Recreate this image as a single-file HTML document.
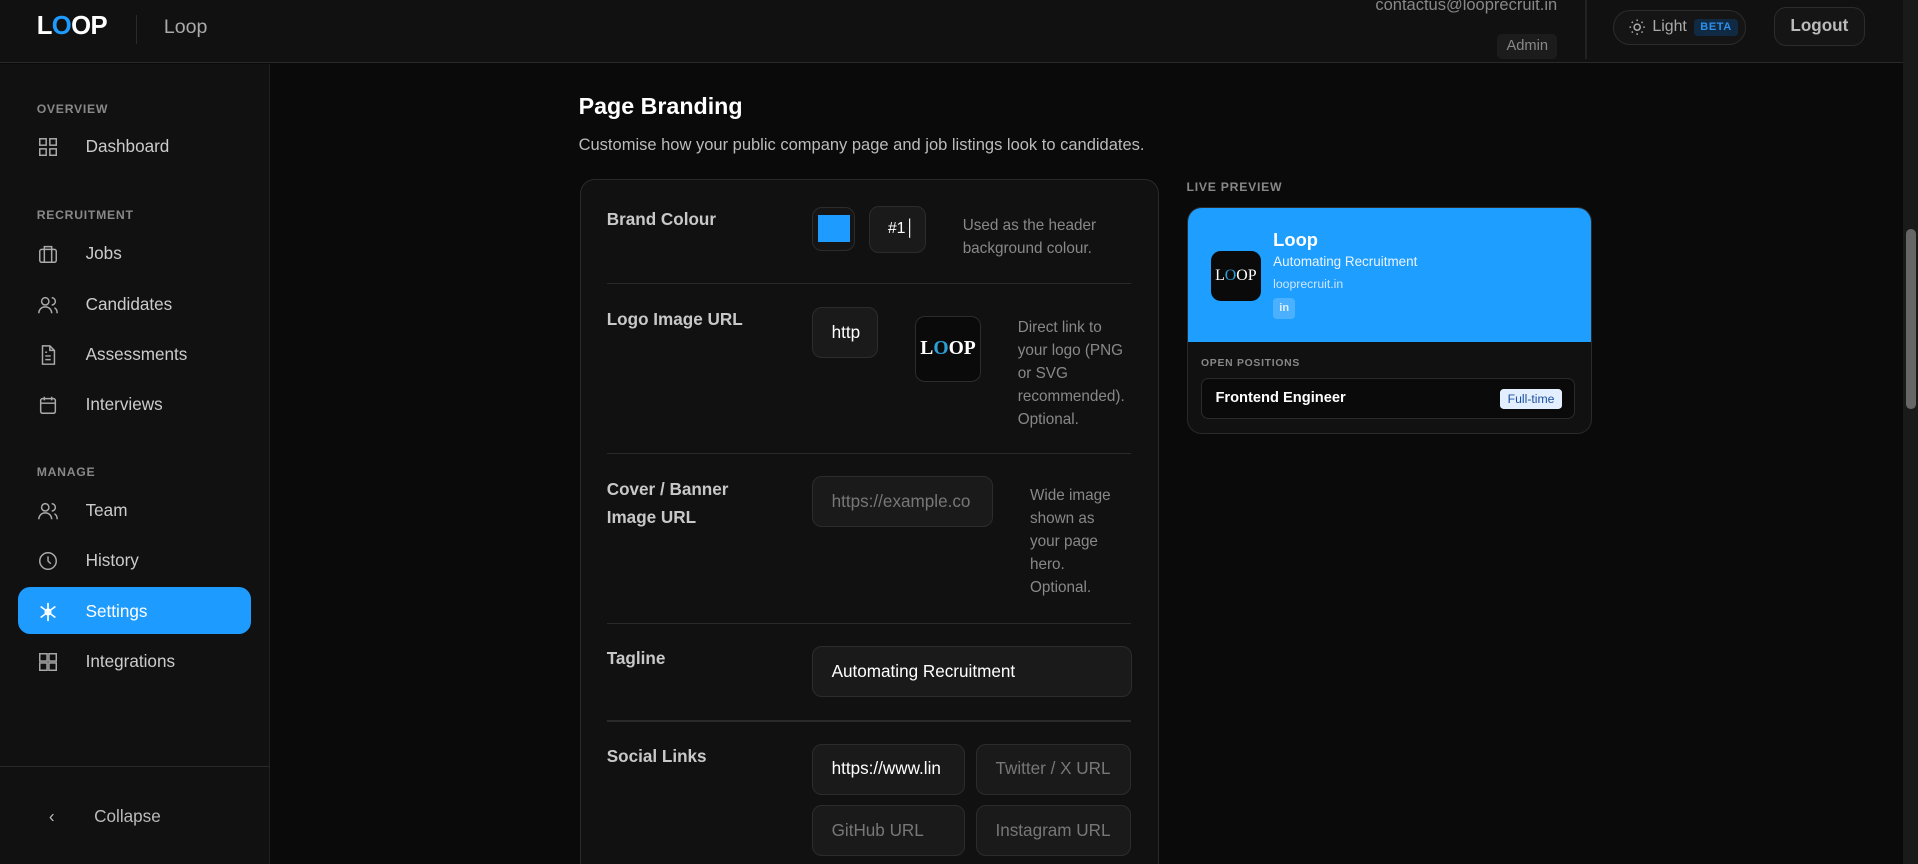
<!DOCTYPE html>
<html><head><meta charset="utf-8"><style>
html{margin:0;padding:0;background:#0a0a0a;overflow:hidden;width:1918px;height:863px}
body{margin:0;padding:0;background:#0a0a0a;overflow:hidden;zoom:1.22325;width:1568px;height:706px;position:relative;font-family:"Liberation Sans","DejaVu Sans",sans-serif;color:#ccc}
.a{position:absolute}
.hdr{left:0;top:0;width:1556px;height:51px;background:#111;border-bottom:1px solid #2a2a2a}
.side{left:0;top:52px;width:220px;height:654px;background:#111;border-right:1px solid #222}
.sl{left:30px;font-size:10px;font-weight:bold;color:#888;letter-spacing:.6px}
.it{left:30px;height:20px;display:flex;align-items:center;font-size:14px;color:#ccc}
.it svg{width:18px;height:18px;margin-right:22px}
.card{left:474px;top:146px;width:472px;height:570px;background:#111;border:1px solid #2a2a2a;border-radius:12px}
.lbl{font-size:14px;font-weight:bold;color:#c8c8c8;line-height:23px}
.inp{background:#1a1a1a;border:1px solid #2c2c2c;border-radius:8px;box-sizing:border-box;font-size:14px;color:#fff;padding-left:15px;display:flex;align-items:center;overflow:hidden;white-space:nowrap}
.help{font-size:12.5px;color:#888;line-height:18.8px}
.div{left:496px;width:429px;height:1px;background:#2a2a2a}
</style></head><body>
<div class="a hdr"></div>
<div class="a" style="left:30px;top:10px;font-size:21px;font-weight:bold;color:#fff;letter-spacing:-.5px">L<span style="color:#1e9bff">O</span>OP</div>
<div class="a" style="left:111px;top:12px;width:1px;height:24px;background:#2a2a2a"></div>
<div class="a" style="left:134px;top:13px;font-size:16px;color:#aaa">Loop</div>
<div class="a" style="left:1060px;width:213px;top:-3px;text-align:right;font-size:13.5px;color:#888">contactus@looprecruit.in</div>
<div class="a" style="left:1224px;top:28px;width:49px;height:20px;background:#1c1c1c;border-radius:4px;font-size:12px;color:#888;text-align:center;line-height:20px">Admin</div>
<div class="a" style="left:1296px;top:0;width:1px;height:48px;background:#222"></div>
<div class="a" style="left:1319px;top:8px;width:107px;height:27px;border:1px solid #2c2c2c;border-radius:14px;background:#151515;display:flex;align-items:center;font-size:13px;color:#aaa">
<svg style="margin-left:11px;margin-right:5px" width="15" height="15" viewBox="0 0 24 24" fill="none" stroke="#aaa" stroke-width="2"><circle cx="12" cy="12" r="4"/><path d="M12 2v2M12 20v2M2 12h2M20 12h2M4.9 4.9l1.4 1.4M17.7 17.7l1.4 1.4M4.9 19.1l1.4-1.4M17.7 6.3l1.4-1.4"/></svg>Light<span style="margin-left:6px;background:#112a44;color:#2e8fe8;font-size:9px;font-weight:bold;padding:2px 5px;border-radius:3px;letter-spacing:.5px">BETA</span></div>
<div class="a" style="left:1450px;top:6px;width:73px;height:30px;border:1px solid #2c2c2c;border-radius:10px;background:#151515;font-size:14px;font-weight:bold;color:#bbb;text-align:center;line-height:30px">Logout</div>
<div class="a" style="left:1556px;top:0;width:12px;height:706px;background:#1a1a1a"></div>
<div class="a" style="left:1558px;top:187px;width:8px;height:147px;background:#666;border-radius:4px"></div>

<div class="a side"></div>
<div class="a sl" style="top:83px">OVERVIEW</div>
<div class="a it" style="top:110px"><svg viewBox="0 0 24 24" fill="none" stroke="#aaa" stroke-width="1.6"><rect x="3" y="3" width="7" height="7"/><rect x="14" y="3" width="7" height="7"/><rect x="3" y="14" width="7" height="7"/><rect x="14" y="14" width="7" height="7"/></svg>Dashboard</div>
<div class="a sl" style="top:170px">RECRUITMENT</div>
<div class="a it" style="top:198px"><svg viewBox="0 0 24 24" fill="none" stroke="#aaa" stroke-width="1.6"><rect x="3" y="7" width="18" height="14" rx="2"/><path d="M8 7V4h8v3M8 7v14M16 7v14"/></svg>Jobs</div>
<div class="a it" style="top:239px"><svg viewBox="0 0 24 24" fill="none" stroke="#aaa" stroke-width="1.6"><circle cx="9" cy="8" r="4"/><path d="M2 21c0-4 3-7 7-7s7 3 7 7M16 4a4 4 0 010 8M19 15c2 1 3 3 3 6"/></svg>Candidates</div>
<div class="a it" style="top:280px"><svg viewBox="0 0 24 24" fill="none" stroke="#aaa" stroke-width="1.6"><path d="M14 2H6v20h13V7z"/><path d="M14 2v5h5M9 13h6M9 17h6M9 9h2"/></svg>Assessments</div>
<div class="a it" style="top:321px"><svg viewBox="0 0 24 24" fill="none" stroke="#aaa" stroke-width="1.6"><rect x="4" y="5" width="16" height="16" rx="2"/><path d="M8 3v4M16 3v4M4 10h16"/></svg>Interviews</div>
<div class="a sl" style="top:380px">MANAGE</div>
<div class="a it" style="top:408px"><svg viewBox="0 0 24 24" fill="none" stroke="#aaa" stroke-width="1.6"><circle cx="9" cy="8" r="4"/><path d="M2 21c0-4 3-7 7-7s7 3 7 7M16 4a4 4 0 010 8M19 15c2 1 3 3 3 6"/></svg>Team</div>
<div class="a it" style="top:449px"><svg viewBox="0 0 24 24" fill="none" stroke="#aaa" stroke-width="1.6"><circle cx="12" cy="12" r="9"/><path d="M12 7v5l3 3"/></svg>History</div>
<div class="a" style="left:15px;top:480px;width:190px;height:38px;background:#1e9bff;border-radius:10px"></div>
<div class="a it" style="top:490px;color:#fff"><svg viewBox="0 0 24 24" fill="none" stroke="#fff" stroke-width="1.8"><path d="M12 2v20M4 6l16 12M4 18L20 6"/><circle cx="12" cy="12" r="3"/></svg>Settings</div>
<div class="a it" style="top:531px"><svg viewBox="0 0 24 24" fill="none" stroke="#aaa" stroke-width="1.6"><rect x="3" y="3" width="8" height="8"/><rect x="13" y="3" width="8" height="8"/><rect x="3" y="13" width="8" height="8"/><rect x="13" y="13" width="8" height="8"/></svg>Integrations</div>
<div class="a" style="left:0;top:626px;width:220px;height:1px;background:#2a2a2a"></div>
<div class="a" style="left:40px;top:660px;font-size:14px;color:#bbb"><span style="display:inline-block;width:37px">&#8249;</span>Collapse</div>

<div class="a" style="left:473px;top:76px;font-size:19px;font-weight:bold;color:#fff">Page Branding</div>
<div class="a" style="left:473px;top:111px;font-size:13.5px;color:#bbb">Customise how your public company page and job listings look to candidates.</div>
<div class="a card"></div>

<div class="a lbl" style="left:496px;top:168px">Brand Colour</div>
<div class="a" style="left:664px;top:169px;width:35px;height:36px;border:1px solid #2c2c2c;border-radius:8px;box-sizing:border-box;background:#151515"><div style="margin:6px 4px;width:26px;height:22px;background:#1e9bff"></div></div>
<div class="a inp" style="left:710px;top:168px;width:47px;height:39px;font-size:13px">#1&#x2502;</div>
<div class="a help" style="left:787px;top:175px">Used as the header<br>background colour.</div>
<div class="a div" style="top:231px"></div>

<div class="a lbl" style="left:496px;top:250px">Logo Image URL</div>
<div class="a inp" style="left:664px;top:251px;width:54px;height:42px">http</div>
<div class="a" style="left:748px;top:258px;width:54px;height:54px;border:1px solid #2c2c2c;border-radius:8px;box-sizing:border-box;background:#0a0a0a;color:#fff;font-family:'Liberation Serif',serif;font-weight:bold;font-size:16px;text-align:center;line-height:52px">L<span style="color:#2aa0d8">O</span>OP</div>
<div class="a help" style="left:832px;top:258px">Direct link to<br>your logo (PNG<br>or SVG<br>recommended).<br>Optional.</div>
<div class="a div" style="top:370px"></div>

<div class="a lbl" style="left:496px;top:389px">Cover / Banner<br>Image URL</div>
<div class="a inp" style="left:664px;top:389px;width:148px;height:42px;color:#777">https://example.co</div>
<div class="a help" style="left:842px;top:396px">Wide image<br>shown as<br>your page<br>hero.<br>Optional.</div>
<div class="a div" style="top:509px"></div>

<div class="a lbl" style="left:496px;top:527px">Tagline</div>
<div class="a inp" style="left:664px;top:528px;width:261px;height:42px">Automating Recruitment</div>
<div class="a div" style="top:589px"></div>

<div class="a lbl" style="left:496px;top:607px">Social Links</div>
<div class="a inp" style="left:664px;top:608px;width:125px;height:42px">https://www.lin</div>
<div class="a inp" style="left:798px;top:608px;width:127px;height:42px;color:#777">Twitter / X URL</div>
<div class="a inp" style="left:664px;top:658px;width:125px;height:42px;color:#777">GitHub URL</div>
<div class="a inp" style="left:798px;top:658px;width:127px;height:42px;color:#777">Instagram URL</div>

<div class="a" style="left:970px;top:147px;font-size:10px;font-weight:bold;color:#888;letter-spacing:.6px">LIVE PREVIEW</div>
<div class="a" style="left:970px;top:169px;width:330px;height:184px;border:1px solid #2a2a2a;border-radius:12px;background:#111;overflow:hidden">
<div style="height:110px;background:#1e9eff;position:relative">
<div class="a" style="left:19px;top:35px;width:41px;height:41px;background:#0a0a0a;border-radius:8px;color:#fff;font-family:'Liberation Serif',serif;font-size:13px;text-align:center;line-height:41px">L<span style="color:#2aa0d8">O</span>OP</div>
<div class="a" style="left:70px;top:17px;font-size:15px;font-weight:bold;color:#fff">Loop</div>
<div class="a" style="left:70px;top:38px;font-size:11px;color:#eaf4ff">Automating Recruitment</div>
<div class="a" style="left:70px;top:57px;font-size:10px;color:#d0e6ff">looprecruit.in</div>
<div class="a" style="left:70px;top:74px;width:18px;height:17px;background:rgba(255,255,255,.2);border-radius:3px;font-size:9px;font-weight:bold;color:#e0efff;text-align:center;line-height:17px">in</div>
</div>
<div class="a" style="left:11px;top:123px;font-size:8.5px;font-weight:bold;color:#888;letter-spacing:.6px">OPEN POSITIONS</div>
<div class="a" style="left:11px;top:139px;width:306px;height:34px;border:1px solid #2a2a2a;border-radius:6px;background:#0a0a0a;box-sizing:border-box">
<div class="a" style="left:11px;top:9px;font-size:12px;font-weight:bold;color:#fff">Frontend Engineer</div>
<div class="a" style="left:244px;top:8px;width:50px;height:17px;background:#e3efff;border-radius:3px;font-size:10px;color:#1a4fa0;text-align:center;line-height:17px">Full-time</div>
</div>
</div>
</body></html>
